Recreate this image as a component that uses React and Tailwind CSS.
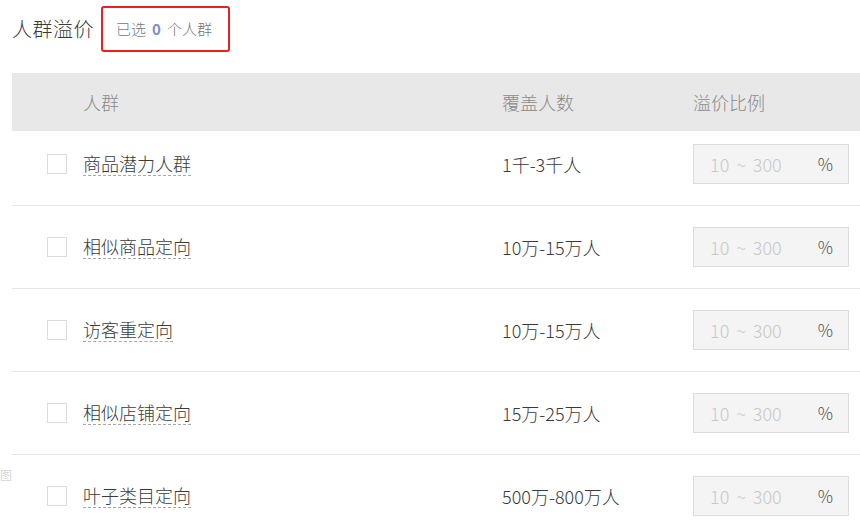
import React from "react";

const rows = [
  { name: "商品潜力人群", cover: "1千-3千人" },
  { name: "相似商品定向", cover: "10万-15万人" },
  { name: "访客重定向", cover: "10万-15万人" },
  { name: "相似店铺定向", cover: "15万-25万人" },
  { name: "叶子类目定向", cover: "500万-800万人" },
];

export default function App() {
  return (
    <div
      className="relative w-[860px] h-[532px] overflow-hidden bg-white pl-[12px] font-light"
      style={{ fontFamily: '"Noto Sans CJK SC", "Noto Sans", sans-serif' }}
    >
      <div className="flex items-center h-[58px]">
        <span className="text-[20px] tracking-[0.5px] text-[#3a3a3a] leading-none">人群溢价</span>
        <div className="ml-[7px] h-[46px] w-[129px] border-2 border-[#e3231f] rounded-[3px] flex items-center pl-[13px] text-[15px] text-[#777]">
          <span>已选</span>
          <span className="mx-[6px] font-bold text-[#7d8fc9]">0</span>
          <span>个人群</span>
        </div>
      </div>

      <div className="mt-[15px]">
        <div className="grid grid-cols-[490px_191px_1fr] h-[58px] items-center bg-[#e8e8e8] text-[18px] text-[#8a8a8a]">
          <div className="pl-[71px]">人群</div>
          <div>覆盖人数</div>
          <div>溢价比例</div>
        </div>

        {rows.map((r, i) => (
          <div
            key={r.name}
            className={
              i === 0
                ? "grid grid-cols-[490px_191px_1fr] h-[74px] pb-[8px] items-center"
                : "grid grid-cols-[490px_191px_1fr] h-[83px] items-center border-t border-[#e6e6e6]"
            }
          >
            <div className="flex items-center pl-[35px]">
              <span className="w-[20px] h-[20px] border border-[#dcdcdc] bg-white" />
              <span className="ml-[16px] text-[18px] text-[#3a3a3a] leading-[22px] border-b border-dashed border-[#a8a8a8] pb-[1px]">
                {r.name}
              </span>
            </div>
            <div className="text-[18px] text-[#3a3a3a]">{r.cover}</div>
            <div>
              <div className="w-[156px] h-[40px] border border-[#dcdcdc] bg-[#f4f4f4] flex items-center justify-between pl-[16px] pr-[15px]">
                <span className="text-[18px] text-[#c8c8c8] [word-spacing:3px]">10 ~ 300</span>
                <span className="text-[17px] text-[#555]">%</span>
              </div>
            </div>
          </div>
        ))}
      </div>

      <span className="absolute left-0 top-[469px] text-[12px] text-[#c4c4c4] leading-none">图</span>
    </div>
  );
}
